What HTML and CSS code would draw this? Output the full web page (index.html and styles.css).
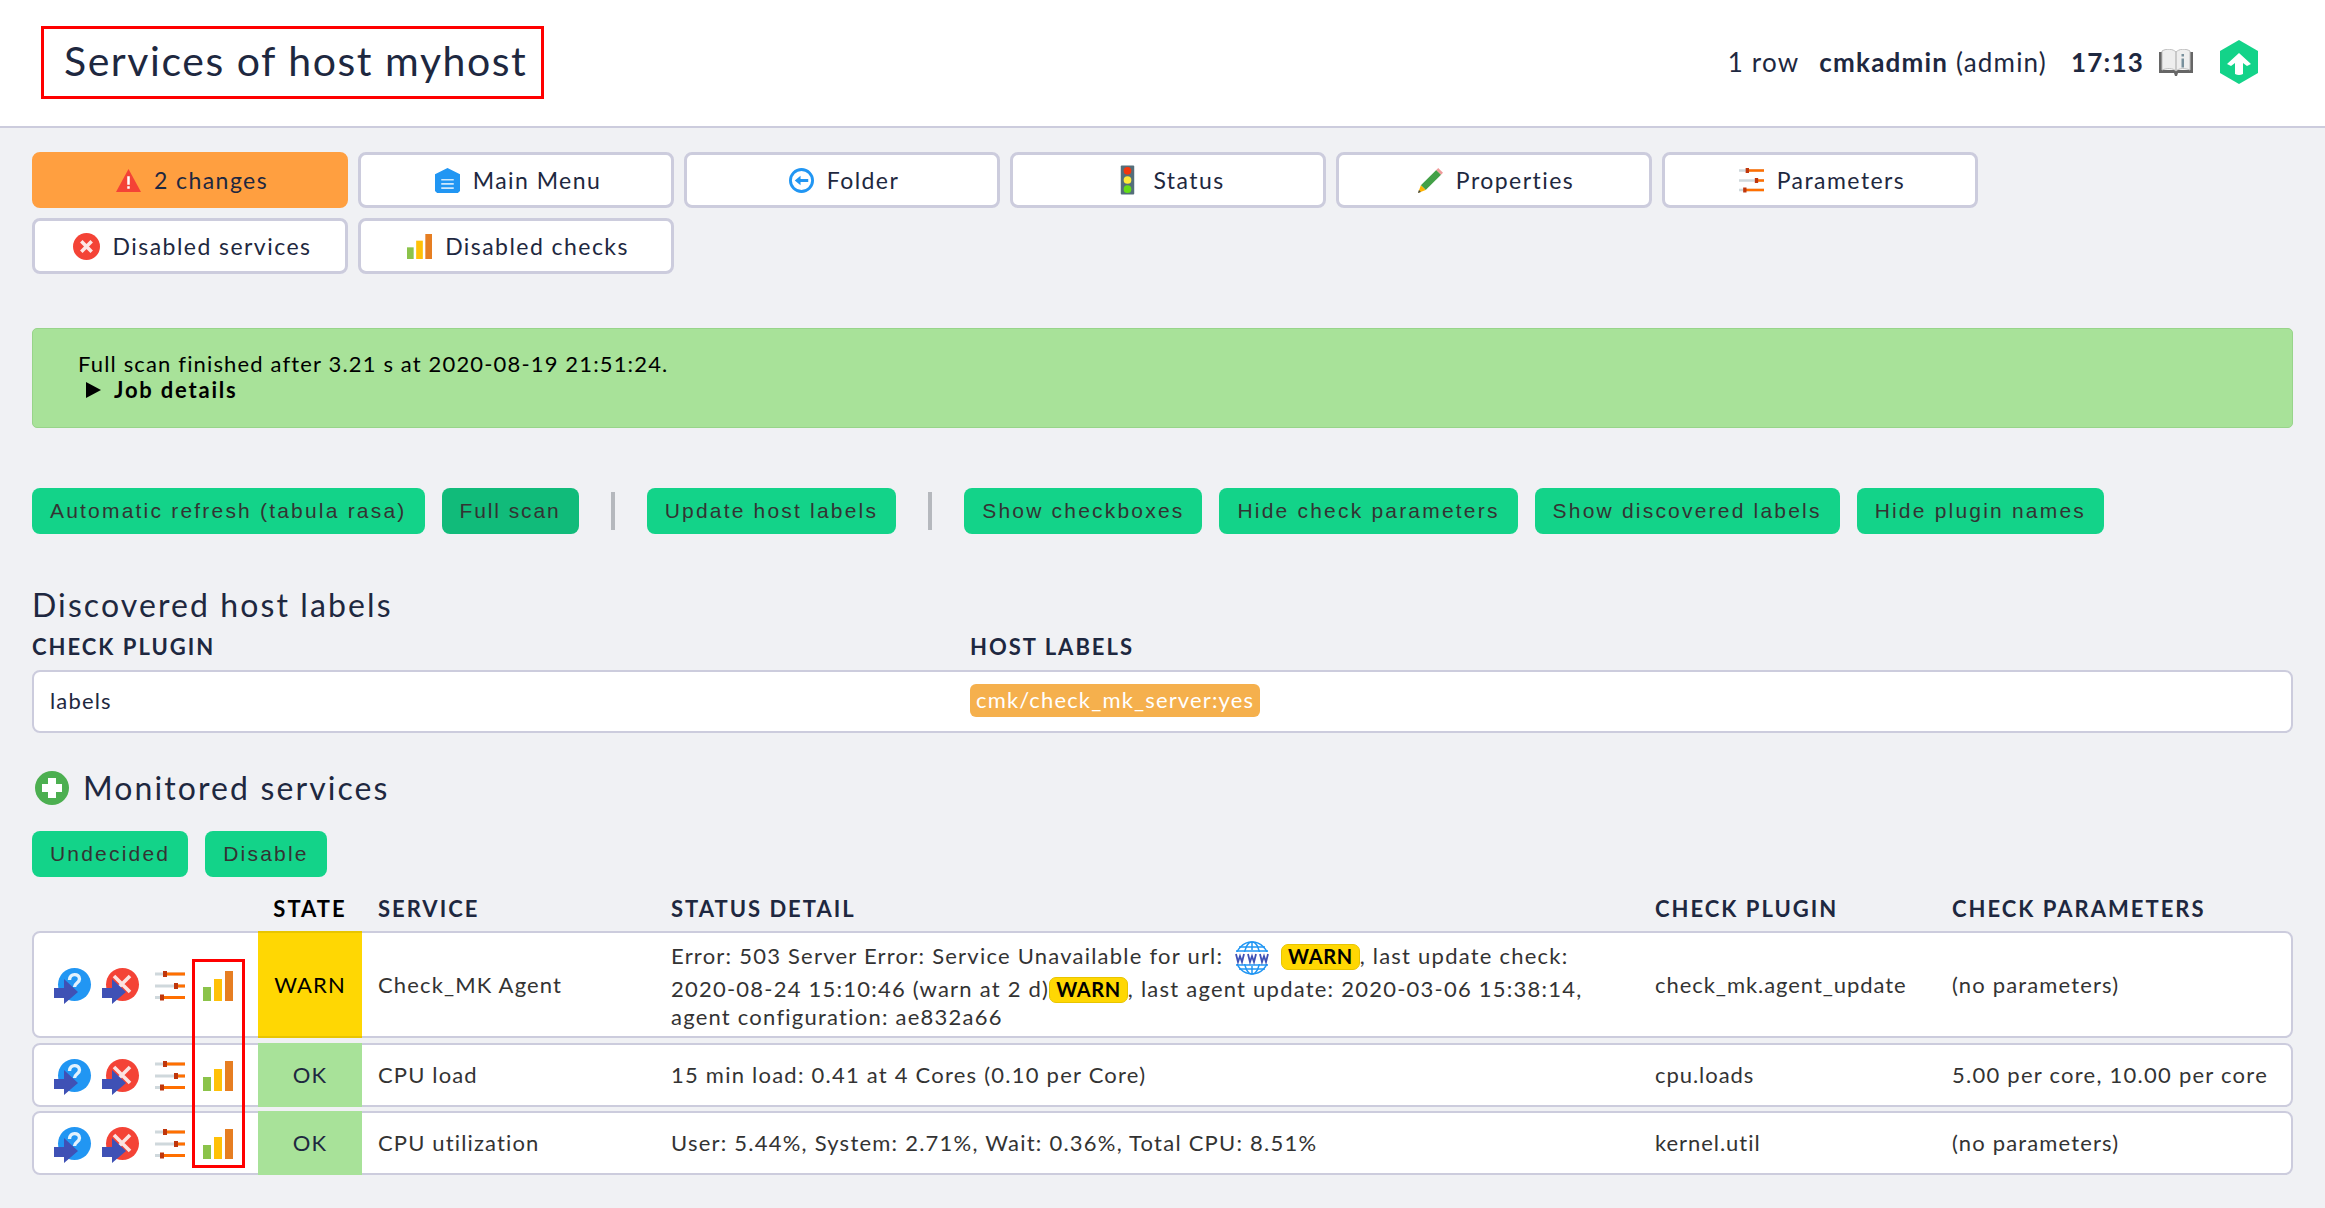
FILE: index.html
```html
<!doctype html>
<html lang="en">
<head>
    <meta charset="UTF-8">
    <title>Services of host myhost</title>
    <link rel="stylesheet" href="styles.css">
</head>
<body>
    <svg class="sprite" width="0" height="0">
        <symbol id="i-ack" viewBox="0 0 38 38">
            <circle cx="20.5" cy="16.5" r="16.5" fill="#2196f3"/>
            <path d="M15.500 12c0-7 10-7 10-1 0 4-5 4-5 8" fill="none" stroke="#e3f2fd" stroke-width="3.400"/>
            <path d="M0 20h10v-9l14 13-14 12v-6H0z" fill="#3f51b5"/>
        </symbol>
        <symbol id="i-dis" viewBox="0 0 38 38">
            <circle cx="20.5" cy="16.5" r="16.5" fill="#f44336"/>
            <path d="M12 8l16 16M28 8L12 24" fill="none" stroke="#fbe3e1" stroke-width="3.600"/>
            <path d="M0 20h10v-9l14 13-14 12v-6H0z" fill="#3f51b5"/>
        </symbol>
        <symbol id="i-sliders" viewBox="0 0 30 30">
            <path d="M0 1.500h30v3H0zM0 13.500h30v3H0zM0 25h30v3H0z" fill="#cfd8dc"/>
            <path d="M10 1.500h20v3H10zM21 13.500h9v3h-9zM7 25h23v3H7z" fill="#ff6f00"/>
            <path d="M8 0h4v6H8zM19 12h4v6h-4zM5 23.500h4v6H5z" fill="#bf360c"/>
        </symbol>
        <symbol id="i-bars" viewBox="0 0 30 30">
            <rect x="0" y="16" width="8" height="14" fill="#8bc34a"/>
            <rect x="11" y="8" width="8" height="22" fill="#ffc107"/>
            <rect x="22" y="0" width="8" height="30" fill="#e67e22"/>
        </symbol>
    </svg>

    <header class="topbar">
        <h1 class="title">Services of host myhost</h1>
        <div class="topinfo">
            <span class="rowcount">1 row</span>
            <span class="user"><b>cmkadmin</b> (admin)</span>
            <b class="clock">17:13</b>
            <svg class="book" viewBox="0 0 34 27">
                <path d="M0 3h3v18h28V3h3v21H19l-1 3h-2l-1-3H0z" fill="#666"/>
                <path d="M3 2c5-3 11-2 14 1v19c-3-3-9-3-14-1zM31 2c-5-3-11-2-14 1v19c3-3 9-3 14-1z" fill="#eee" stroke="#bdbdbd"/>
                <path d="M22.500 5h2.500v2.500h-2.500zM22.500 9.500h2.500v9h-2.500z" fill="#78909c"/>
            </svg>
            <svg class="logo" viewBox="0 0 38 44">
                <path d="M19 0l19 11v22L19 44 0 33V11z" fill="#13d389"/>
                <path d="M19 13L7 24l4 2 4-3v11q4 2 8 0V23l4 3 4-2z" fill="#fff"/>
            </svg>
        </div>
    </header>

    <main class="content">
        <nav class="menu">
            <a class="menubtn menubtn-warn">
                <svg class="ico" viewBox="0 0 24 24"><path d="M12 1l12 22H0z" fill="#f44336"/><path d="M10.800 8h2.400v8h-2.400zM10.800 17.500h2.400V20h-2.400z" fill="#fff"/></svg>
                2 changes
            </a>
            <a class="menubtn">
                <svg class="ico" viewBox="0 0 24 24"><path d="M12 0l12 6v16l-2 2H2l-2-2V6z" fill="#2196f3"/><path d="M6 10.500h12v1.600H6zM6 14.500h12v1.600H6zM6 18.500h12v1.600H6z" fill="#cfe8fc"/></svg>
                Main Menu
            </a>
            <a class="menubtn">
                <svg class="ico" viewBox="0 0 26 26"><circle cx="13" cy="13" r="11.500" fill="#fff" stroke="#2196f3" stroke-width="3"/><path d="M6 13l6-5v3.500h8v3h-8V18z" fill="#2196f3"/></svg>
                Folder
            </a>
            <a class="menubtn">
                <svg class="ico ico-tall" viewBox="0 0 26 30"><rect x="6" y="0" width="14" height="30" rx="1" fill="#546e7a"/><circle cx="13" cy="5.500" r="4" fill="#f4360c"/><circle cx="13" cy="15" r="4" fill="#ffeb3b"/><circle cx="13" cy="24.500" r="4" fill="#64dd17"/></svg>
                Status
            </a>
            <a class="menubtn">
                <svg class="ico" viewBox="0 0 26 26"><path d="M3 18L19 2l5 5L8 23z" fill="#43a047"/><path d="M19 2l2-2 5 5-2 2z" fill="#ef9a9a"/><path d="M3 18l5 5-8 3z" fill="#ffb300"/><path d="M1 23l2 2-3 1z" fill="#37474f"/></svg>
                Properties
            </a>
            <a class="menubtn">
                <svg class="ico"><use href="#i-sliders"/></svg>
                Parameters
            </a>
            <a class="menubtn">
                <svg class="ico ico-x" viewBox="0 0 26 26"><circle cx="13" cy="13" r="13" fill="#f44336"/><path d="M8 8l10 10M18 8L8 18" stroke="#fde7e5" stroke-width="3.400"/></svg>
                Disabled services
            </a>
            <a class="menubtn">
                <svg class="ico"><use href="#i-bars"/></svg>
                Disabled checks
            </a>
        </nav>

        <div class="message">
            <div>Full scan finished after 3.21 s at 2020-08-19 21:51:24.</div>
            <div class="jobdetails"><span class="arrow"></span>Job details</div>
        </div>

        <div class="actions">
            <a class="btn">Automatic refresh (tabula rasa)</a>
            <a class="btn btn-active">Full scan</a>
            <span class="sep"></span>
            <a class="btn">Update host labels</a>
            <span class="sep"></span>
            <a class="btn">Show checkboxes</a>
            <a class="btn">Hide check parameters</a>
            <a class="btn">Show discovered labels</a>
            <a class="btn">Hide plugin names</a>
        </div>

        <h2 class="section">Discovered host labels</h2>
        <div class="labelhead">
            <span>CHECK PLUGIN</span>
            <span>HOST LABELS</span>
        </div>
        <div class="labelrow">
            <span>labels</span>
            <span><span class="chip">cmk/check_mk_server:yes</span></span>
        </div>

        <h2 class="section section-mon">
            <svg class="plus" viewBox="0 0 34 34"><circle cx="17" cy="17" r="17" fill="#4caf50"/><path d="M13 7h8v6h6v8h-6v6h-8v-6H7v-8h6z" fill="#fff"/></svg>
            Monitored services
        </h2>
        <div class="actions actions-mon">
            <a class="btn">Undecided</a>
            <a class="btn">Disable</a>
        </div>

        <div class="services">
            <div class="grid servicehead">
                <span></span>
                <span class="statehead">STATE</span>
                <span class="cell">SERVICE</span>
                <span class="cell">STATUS DETAIL</span>
                <span class="cell">CHECK PLUGIN</span>
                <span class="cell">CHECK PARAMETERS</span>
            </div>

            <div class="grid service service-tall">
                <div class="icons">
                    <svg class="ic38"><use href="#i-ack"/></svg>
                    <svg class="ic38"><use href="#i-dis"/></svg>
                    <svg class="ic30"><use href="#i-sliders"/></svg>
                    <svg class="ic30"><use href="#i-bars"/></svg>
                </div>
                <div class="state state-warn">WARN</div>
                <div class="cell">Check_MK Agent</div>
                <div class="cell detail">
                    <div class="line">
                        <span>Error: 503 Server Error: Service Unavailable for url:</span>
                        <svg class="www" viewBox="0 0 34 34">
                            <g fill="none" stroke="#2196f3" stroke-width="1.500">
                                <circle cx="17" cy="17" r="16"/>
                                <ellipse cx="17" cy="17" rx="8" ry="16"/>
                                <path d="M17 1v8M17 25v8M4 6h26M1 10h32M1 24h32M4 28h26"/>
                            </g>
                            <rect x="0" y="11" width="34" height="12" fill="#fff"/>
                            <path d="M1 13l2 8 2-6 2 6 2-8M13 13l2 8 2-6 2 6 2-8M25 13l2 8 2-6 2 6 2-8" fill="none" stroke="#3f51b5" stroke-width="1.800"/>
                        </svg>
                        <span class="badge">WARN</span><span>, last update check:</span>
                    </div>
                    <div class="line">
                        <span>2020-08-24 15:10:46 (warn at 2 d)</span><span class="badge">WARN</span><span>, last agent update: 2020-03-06 15:38:14,</span>
                    </div>
                    <div class="line">agent configuration: ae832a66</div>
                </div>
                <div class="cell plugin">check_mk.agent_update</div>
                <div class="cell">(no parameters)</div>
            </div>

            <div class="grid service">
                <div class="icons">
                    <svg class="ic38"><use href="#i-ack"/></svg>
                    <svg class="ic38"><use href="#i-dis"/></svg>
                    <svg class="ic30"><use href="#i-sliders"/></svg>
                    <svg class="ic30"><use href="#i-bars"/></svg>
                </div>
                <div class="state state-ok">OK</div>
                <div class="cell">CPU load</div>
                <div class="cell detail">15 min load: 0.41 at 4 Cores (0.10 per Core)</div>
                <div class="cell plugin">cpu.loads</div>
                <div class="cell params">5.00 per core, 10.00 per core</div>
            </div>

            <div class="grid service">
                <div class="icons">
                    <svg class="ic38"><use href="#i-ack"/></svg>
                    <svg class="ic38"><use href="#i-dis"/></svg>
                    <svg class="ic30"><use href="#i-sliders"/></svg>
                    <svg class="ic30"><use href="#i-bars"/></svg>
                </div>
                <div class="state state-ok">OK</div>
                <div class="cell">CPU utilization</div>
                <div class="cell detail">User: 5.44%, System: 2.71%, Wait: 0.36%, Total CPU: 8.51%</div>
                <div class="cell plugin">kernel.util</div>
                <div class="cell">(no parameters)</div>
            </div>

            <div class="redbox"></div>
        </div>
    </main>
</body>
</html>
```

FILE: styles.css
```css
*{
    margin: 0;
    padding: 0;
    box-sizing: border-box;
}
html,body{
    height: 100%;
}
body{
    background: #f0f1f4;
    color: #1e2840;
    font: 22px/28px "Lato", "Liberation Sans", sans-serif;
    letter-spacing: 1.15px;
}
.sprite{
    display: block;
}

/* top bar */
.topbar{
    height: 128px;
    background: #fff;
    border-bottom: 2px solid #ccccdd;
    display: flex;
    align-items: center;
    justify-content: space-between;
    padding: 0 67px 2px 41px;
}
.title{
    width: 503px;
    height: 73px;
    border: 3px solid #f00;
    padding-left: 20px;
    font-size: 41px;
    font-weight: 400;
    line-height: 64px;
    letter-spacing: 1.55px;
    color: #1e2840;
}
.topinfo{
    display: flex;
    align-items: center;
    font-size: 26px;
    letter-spacing: 1.2px;
}
.rowcount{
    margin-right: 20px;
}
.user{
    margin-right: 24px;
}
.clock{
    margin-right: 15px;
}
.book{
    width: 34px;
    height: 27px;
    margin-right: 27px;
}
.logo{
    width: 38px;
    height: 44px;
}

.content{
    padding: 24px 32px 0;
}

/* page menu */
.menu{
    display: flex;
    flex-wrap: wrap;
    gap: 10px;
    width: 1960px;
}
.menubtn{
    width: 316px;
    height: 56px;
    padding-left: 4px;
    background: #fff;
    border: 3px solid #ccccdd;
    border-radius: 8px;
    display: flex;
    align-items: center;
    justify-content: center;
    gap: 13px;
    font-size: 23px;
    letter-spacing: 1.45px;
}
.menubtn-warn{
    background: #ff9f40;
    border-color: #ff9f40;
}
.ico{
    width: 25px;
    height: 25px;
}
.ico-tall{
    height: 30px;
}
.ico-x{
    width: 27px;
    height: 27px;
}

.message{
    margin-top: 54px;
    height: 100px;
    padding: 22px 45px;
    background: #a8e299;
    border: 1px solid #98d48a;
    border-radius: 5px;
    color: #000;
    line-height: 26px;
}
.jobdetails{
    font-weight: 700;
    padding-left: 8px;
    display: flex;
    align-items: center;
    letter-spacing: 1.8px;
}
.arrow{
    width: 0;
    height: 0;
    border-left: 15px solid #000;
    border-top: 8px solid transparent;
    border-bottom: 8px solid transparent;
    margin-right: 13px;
}

/* green buttons */
.actions{
    margin-top: 60px;
    display: flex;
    align-items: center;
    gap: 17px;
}
.actions-mon{
    margin-top: 22px;
}
.btn{
    height: 46px;
    padding: 0 18px;
    background: #13d389;
    border-radius: 8px;
    color: #333;
    font: 21px/46px "Liberation Sans", sans-serif;
    letter-spacing: 2.2px;
}
.btn-active{
    background: #11bb7a;
    letter-spacing: 1.9px;
}
.sep{
    width: 4px;
    height: 38px;
    background: #b5b8bd;
    margin: 0 15px;
}

.section{
    margin-top: 50px;
    font-size: 32px;
    font-weight: 400;
    line-height: 42px;
    letter-spacing: 2.1px;
}
.section-mon{
    margin-top: 34px;
    display: flex;
    align-items: center;
    gap: 14px;
    padding-left: 3px;
}
.plus{
    width: 34px;
    height: 34px;
}
.labelhead{
    margin-top: 7px;
    display: grid;
    grid-template-columns: 938px 1fr;
    font-weight: 700;
    font-size: 22px;
    letter-spacing: 2px;
    line-height: 28px;
}
.labelrow{
    margin-top: 9px;
    height: 63px;
    display: grid;
    grid-template-columns: 938px 1fr;
    align-items: center;
    padding-left: 16px;
    padding-bottom: 2px;
    background: #fff;
    border: 2px solid #ccccdd;
    border-radius: 8px;
}
.labelrow > span + span{
    margin-left: -18px;
}
.chip{
    display: inline-block;
    width: 290px;
    height: 33px;
    padding-left: 6px;
    background: #f5b04d;
    border-radius: 6px;
    color: #fff;
    line-height: 32px;
    white-space: nowrap;
}

/* services table */
.services{
    position: relative;
    margin-top: 10px;
}
.grid{
    display: grid;
    grid-template-columns: 224px 104px 293px 984px 297px 1fr;
    align-items: center;
}
.servicehead{
    padding: 0 2px;
    height: 44px;
    font-weight: 700;
    font-size: 22px;
    letter-spacing: 2px;
}
.statehead{
    text-align: center;
    color: #000;
}
.cell{
    padding: 0 16px;
}
.service{
    background: #fff;
    border: 2px solid #ccccdd;
    border-radius: 8px;
    min-height: 64px;
    margin-bottom: 4px;
    color: #333;
}
.service-tall{
    min-height: 107px;
    margin-bottom: 5px;
}
.icons{
    display: flex;
    align-items: center;
    padding-left: 20px;
    padding-top: 5px;
}
.ic38{
    width: 38px;
    height: 38px;
    margin-right: 10px;
}
.ic30{
    width: 30px;
    height: 30px;
    margin-left: 5px;
    margin-right: 13px;
    margin-top: -3px;
}
.state{
    align-self: stretch;
    margin: -2px 0;
    display: flex;
    align-items: center;
    justify-content: center;
    font-size: 22px;
    letter-spacing: 1.1px;
    color: #1e2840;
}
.state-warn{
    background: #ffd703;
    border-top: 2px solid #e8c500;
    border-bottom: 2px solid #e8c500;
    color: #000;
}
.state-ok{
    background: #a8e299;
}
.detail{
    letter-spacing: 1.23px;
}
.service-tall .detail{
    padding-top: 3px;
}
.plugin{
    letter-spacing: .95px;
}
.params{
    letter-spacing: 1.25px;
}
.line{
    white-space: nowrap;
}
.www{
    width: 34px;
    height: 34px;
    vertical-align: middle;
    margin: 0 5px;
}
.badge{
    display: inline-block;
    height: 26px;
    padding: 0 6px;
    background: #ffd703;
    border: 1px solid #e8c500;
    border-radius: 7px;
    color: #000;
    font-weight: 700;
    font-size: 20px;
    line-height: 22px;
    letter-spacing: .6px;
}

/* annotation over the table */
.redbox{
    position: absolute;
    left: 160px;
    top: 72px;
    width: 53px;
    height: 209px;
    border: 3px solid #f00;
}
```
